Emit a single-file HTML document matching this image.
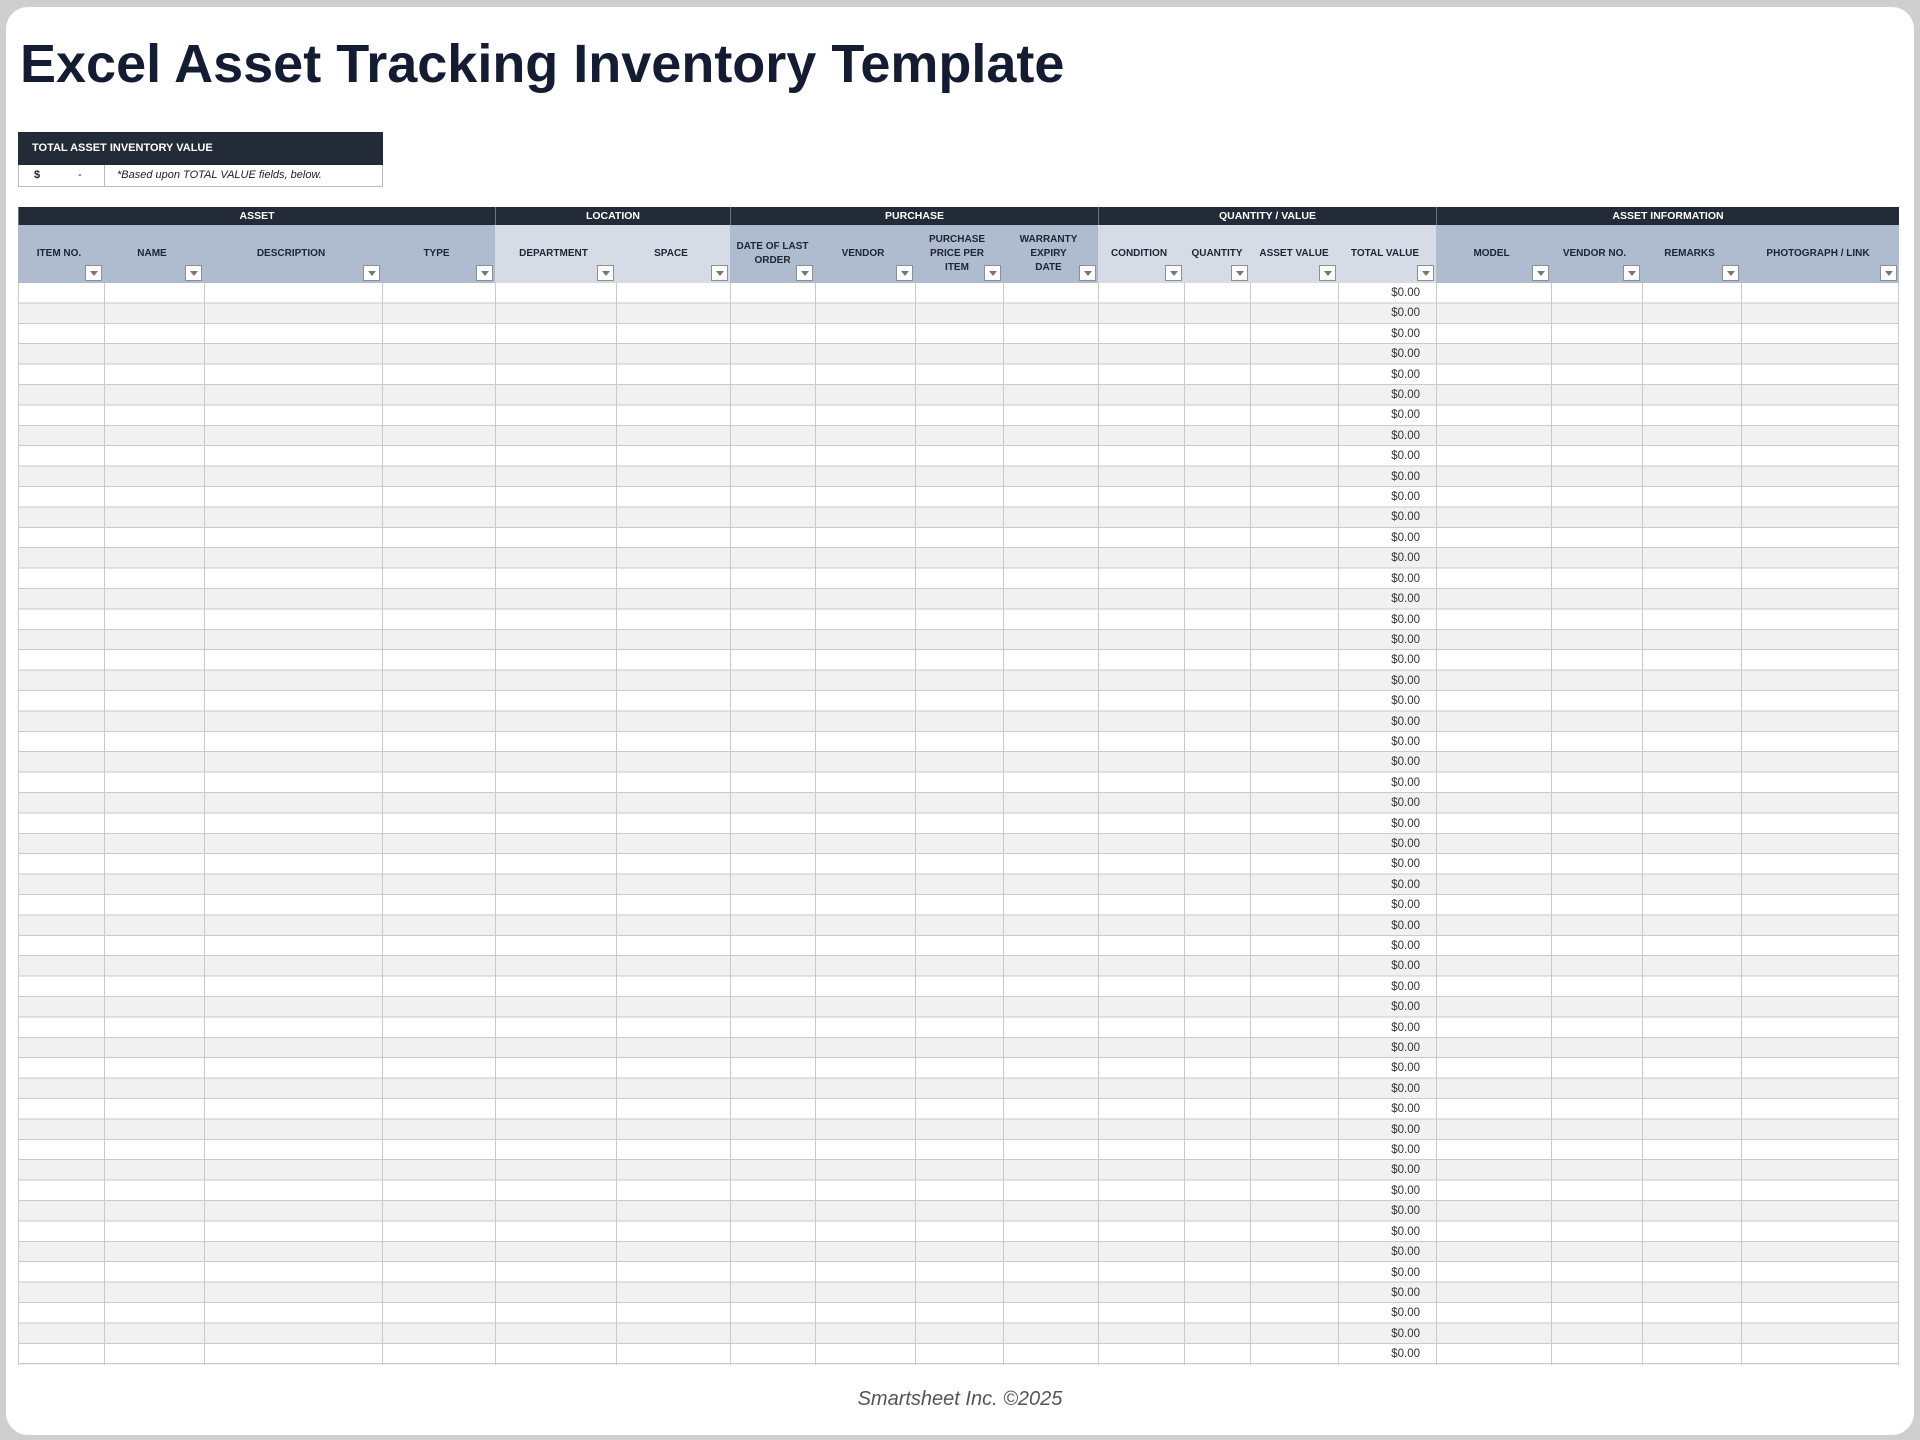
<!DOCTYPE html>
<html><head><meta charset="utf-8"><style>
*{margin:0;padding:0;box-sizing:border-box}
body{width:1920px;height:1440px;background:#cfcfcf;position:relative;overflow:hidden;font-family:"Liberation Sans",sans-serif}
.card{position:absolute;left:6px;top:7px;width:1908px;height:1428px;background:#fff;border-radius:22px}
.title{position:absolute;left:20px;top:33px;font-size:54px;font-weight:bold;color:#141c33;letter-spacing:0px;white-space:nowrap}
.sumh{position:absolute;left:18px;top:132px;width:365px;height:33px;background:#232a38;color:#fff;font-size:11px;font-weight:bold;line-height:33px;padding-left:14px}
.sumr{position:absolute;left:18px;top:165px;width:365px;height:22px;border:1px solid #bbb;border-top:none;font-size:11px;line-height:20px;color:#222}
.sumr .a{position:absolute;left:0;top:0;width:86px;height:21px;border-right:1px solid #bbb}
.grp{position:absolute;top:207px;height:18px;background:#232a38;color:#fff;font-size:10.5px;font-weight:bold;text-align:center;line-height:18px;border-left:1px solid #6a7180}
.ch{position:absolute;top:225px;height:58px;font-size:10px;font-weight:bold;color:#1d2433;text-align:center;display:flex;align-items:center;justify-content:center;line-height:14px;padding:0 8px 0 4px;white-space:nowrap}
.dk{background:#afbccf}.lt{background:#d6dce6}
.dd{position:absolute;right:2px;bottom:2px;width:17px;height:16px;background:#fff;border:1px solid #8a8f98}
.dd:after{content:"";position:absolute;left:4px;top:5px;border-left:4px solid transparent;border-right:4px solid transparent;border-top:5px solid #777}
.body{position:absolute;left:18px;top:283px;width:1881px;height:1082px;
background:repeating-linear-gradient(to bottom,#fff 0,#fff 19.4px,#c9c9c9 19.4px,#c9c9c9 20.4px,#f1f1f1 20.4px,#f1f1f1 39.8px,#c9c9c9 39.8px,#c9c9c9 40.8px);border-left:1px solid #ccc;border-right:1px solid #ccc}
.vl{position:absolute;top:283px;height:1082px;width:1px;background:#c9c9c9}
.vals{position:absolute;left:1338px;top:283px;width:98px}
.vals div{height:20.415px;line-height:20px;text-align:right;padding-right:16px;font-size:11.5px;color:#333}
.foot{position:absolute;left:0;width:1920px;top:1388px;text-align:center;font-style:italic;font-size:20px;color:#555}
</style></head><body>
<div class="card"></div>
<div class="title">Excel Asset Tracking Inventory Template</div>
<div class="sumh">TOTAL ASSET INVENTORY VALUE</div>
<div class="sumr"><div class="a"><span style="position:absolute;left:15px;font-weight:bold">$</span><span style="position:absolute;left:59px">-</span></div><span style="position:absolute;left:98px;font-style:italic">*Based upon TOTAL VALUE fields, below.</span></div>

<div class="grp" style="left:18px;width:477px">ASSET</div>
<div class="grp" style="left:495px;width:235px">LOCATION</div>
<div class="grp" style="left:730px;width:368px">PURCHASE</div>
<div class="grp" style="left:1098px;width:338px">QUANTITY / VALUE</div>
<div class="grp" style="left:1436px;width:463px">ASSET INFORMATION</div>

<div class="ch dk" style="left:18px;width:86px">ITEM NO.<i class="dd"></i></div>
<div class="ch dk" style="left:104px;width:100px">NAME<i class="dd"></i></div>
<div class="ch dk" style="left:204px;width:178px">DESCRIPTION<i class="dd"></i></div>
<div class="ch dk" style="left:382px;width:113px">TYPE<i class="dd"></i></div>
<div class="ch lt" style="left:495px;width:121px">DEPARTMENT<i class="dd"></i></div>
<div class="ch lt" style="left:616px;width:114px">SPACE<i class="dd"></i></div>
<div class="ch dk" style="left:730px;width:85px;padding-right:4px">DATE OF LAST<br>ORDER<i class="dd"></i></div>
<div class="ch dk" style="left:815px;width:100px">VENDOR<i class="dd"></i></div>
<div class="ch dk" style="left:915px;width:88px">PURCHASE<br>PRICE PER<br>ITEM<i class="dd"></i></div>
<div class="ch dk" style="left:1003px;width:95px">WARRANTY<br>EXPIRY<br>DATE<i class="dd"></i></div>
<div class="ch lt" style="left:1098px;width:86px">CONDITION<i class="dd"></i></div>
<div class="ch lt" style="left:1184px;width:66px;padding:0 2px">QUANTITY<i class="dd"></i></div>
<div class="ch lt" style="left:1250px;width:88px;padding:0 2px">ASSET VALUE<i class="dd"></i></div>
<div class="ch lt" style="left:1338px;width:98px">TOTAL VALUE<i class="dd"></i></div>
<div class="ch dk" style="left:1436px;width:115px">MODEL<i class="dd"></i></div>
<div class="ch dk" style="left:1551px;width:91px">VENDOR NO.<i class="dd"></i></div>
<div class="ch dk" style="left:1642px;width:99px">REMARKS<i class="dd"></i></div>
<div class="ch dk" style="left:1741px;width:158px">PHOTOGRAPH / LINK<i class="dd"></i></div>

<div class="body"></div>
<div class="vl" style="left:104px"></div><div class="vl" style="left:204px"></div><div class="vl" style="left:382px"></div><div class="vl" style="left:495px"></div><div class="vl" style="left:616px"></div><div class="vl" style="left:730px"></div><div class="vl" style="left:815px"></div><div class="vl" style="left:915px"></div><div class="vl" style="left:1003px"></div><div class="vl" style="left:1098px"></div><div class="vl" style="left:1184px"></div><div class="vl" style="left:1250px"></div><div class="vl" style="left:1338px"></div><div class="vl" style="left:1436px"></div><div class="vl" style="left:1551px"></div><div class="vl" style="left:1642px"></div><div class="vl" style="left:1741px"></div>

<div class="vals">
<div>$0.00</div><div>$0.00</div><div>$0.00</div><div>$0.00</div><div>$0.00</div><div>$0.00</div><div>$0.00</div><div>$0.00</div><div>$0.00</div><div>$0.00</div>
<div>$0.00</div><div>$0.00</div><div>$0.00</div><div>$0.00</div><div>$0.00</div><div>$0.00</div><div>$0.00</div><div>$0.00</div><div>$0.00</div><div>$0.00</div>
<div>$0.00</div><div>$0.00</div><div>$0.00</div><div>$0.00</div><div>$0.00</div><div>$0.00</div><div>$0.00</div><div>$0.00</div><div>$0.00</div><div>$0.00</div>
<div>$0.00</div><div>$0.00</div><div>$0.00</div><div>$0.00</div><div>$0.00</div><div>$0.00</div><div>$0.00</div><div>$0.00</div><div>$0.00</div><div>$0.00</div>
<div>$0.00</div><div>$0.00</div><div>$0.00</div><div>$0.00</div><div>$0.00</div><div>$0.00</div><div>$0.00</div><div>$0.00</div><div>$0.00</div><div>$0.00</div>
<div>$0.00</div><div>$0.00</div><div>$0.00</div>
</div>
<div class="foot">Smartsheet Inc. ©2025</div>
</body></html>
